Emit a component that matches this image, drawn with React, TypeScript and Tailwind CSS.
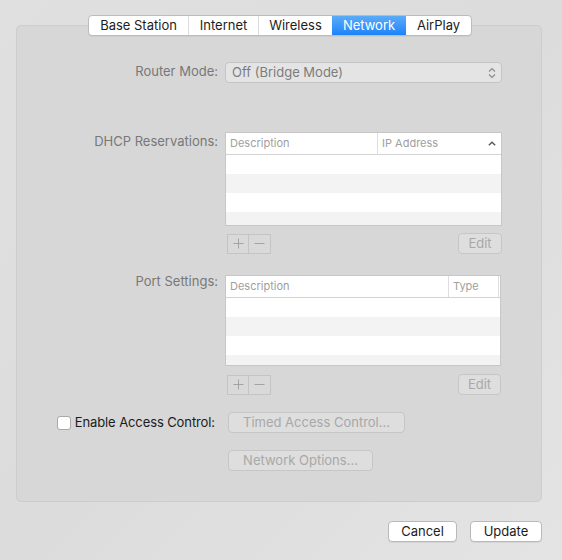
import React from "react";

const TABS = ["Base Station", "Internet", "Wireless", "Network", "AirPlay"];
const TAB_W: Record<string, string> = {
  "Base Station": "w-[99px]",
  Internet: "w-[70px]",
  Wireless: "w-[74px]",
  Network: "w-[74px]",
  AirPlay: "w-[65px]",
};

function Tabs() {
  return (
    <div className="relative z-10 flex justify-center pl-[2px]">
      <div className="flex h-[21px] overflow-hidden rounded-[4px] border border-[#bcbcbc] bg-white shadow-[0_1px_0_rgba(0,0,0,0.05)]">
        {TABS.map((t, i) => {
          const active = t === "Network";
          return (
            <div
              key={t}
              className={`${TAB_W[t]} flex items-center justify-center text-[13px] leading-none ${
                active
                  ? "bg-gradient-to-b from-[#5aabf8] to-[#1a83fb] text-white"
                  : "text-[#1d1d1d]"
              } ${i > 0 && !active && TABS[i - 1] !== "Network" ? "border-l border-[#dcdcdc]" : ""}`}
            >
              {t}
            </div>
          );
        })}
      </div>
    </div>
  );
}

function Label({ children }: { children: React.ReactNode }) {
  return <div className="text-right text-[13px] text-[#787878]">{children}</div>;
}

function DisabledButton({ children, w }: { children: React.ReactNode; w: string }) {
  return (
    <div
      className={`${w} flex h-[21px] items-center justify-center rounded-[4px] border border-[#c6c6c6] bg-[#dedede] text-[13px] text-[#a8a8a8]`}
    >
      {children}
    </div>
  );
}

function PlusMinus() {
  return (
    <div className="ml-[2px] flex h-[20px] border border-[#c4c4c4] bg-[#d9d9d9]">
      <div className="flex w-[21px] items-center justify-center border-r border-[#c4c4c4]">
        <svg width="11" height="11" viewBox="0 0 11 11">
          <path d="M5.5 0.5v10M0.5 5.5h10" stroke="#a3a3a3" strokeWidth="1" />
        </svg>
      </div>
      <div className="flex w-[21px] items-center justify-center">
        <svg width="11" height="11" viewBox="0 0 11 11">
          <path d="M0.5 5.5h10" stroke="#a3a3a3" strokeWidth="1" />
        </svg>
      </div>
    </div>
  );
}

function Table({ cols, sort, h }: { cols: [string, string, string]; sort?: boolean; h: string }) {
  return (
    <div className={`${h} overflow-hidden border border-[#c7c7c7] bg-white`}>
      <div className="flex h-[22px] items-center border-b border-[#d3d3d3] text-[11px] text-[#a0a0a0]">
        <div className={`${cols[2]} h-full border-r border-[#dedede] pl-[4px] leading-[21px]`}>
          {cols[0]}
        </div>
        <div className="flex h-full flex-1 items-center justify-between pl-[4px] pr-[5px]">
          <span>{cols[1]}</span>
          {sort && (
            <svg width="8" height="5" viewBox="0 0 8 5">
              <path d="M0.8 4.3L4 1.2L7.2 4.3" fill="none" stroke="#555" strokeWidth="1.3" />
            </svg>
          )}
        </div>
        {!sort && <div className="h-full w-[2px] border-l border-[#dedede]" />}
      </div>
      <div className="h-[19px] bg-white" />
      <div className="h-[19px] bg-[#f3f3f3]" />
      <div className="h-[19px] bg-white" />
      <div className="h-[19px] bg-[#f3f3f3]" />
    </div>
  );
}

export default function App() {
  return (
    <div
      className="h-[560px] w-[562px] bg-gradient-to-br from-[#e0e0e0] via-[#dcdcdc] to-[#e4e4e4] pt-[15px]"
      style={{ fontFamily: 'Inter, "Liberation Sans", Arial, sans-serif' }}
    >
      <div className="ml-[16px] w-[526px]">
        <Tabs />
        <div className="-mt-[11px] h-[477px] rounded-[5px] border border-[#cdcdcd] bg-[#d7d7d7] pt-[36px]">
          <div className="grid grid-cols-[201px_277px] gap-x-[7px]">
            {/* Router mode */}
            <div className="flex h-[20px] items-center justify-end">
              <Label>Router Mode:</Label>
            </div>
            <div className="flex h-[21px] items-center justify-between rounded-[4px] border border-[#c4c4c4] bg-[#e4e4e4] pl-[6px] pr-[5px] text-[13px] text-[#7c7c7c]">
              <span>Off (Bridge Mode)</span>
              <svg width="8" height="12" viewBox="0 0 8 12">
                <path d="M1 4.5L4 1.5L7 4.5M1 7.5L4 10.5L7 7.5" fill="none" stroke="#8a8a8a" strokeWidth="1.1" />
              </svg>
            </div>

            {/* DHCP */}
            <div className="mt-[49px]">
              <Label>DHCP Reservations:</Label>
            </div>
            <div className="mt-[49px]">
              <Table cols={["Description", "IP Address", "w-[152px]"]} sort h="h-[94px]" />
              <div className="mt-[7px] flex items-center justify-between">
                <PlusMinus />
                <DisabledButton w="w-[44px]">Edit</DisabledButton>
              </div>
            </div>

            {/* Port settings */}
            <div className="mt-[18px]">
              <Label>Port Settings:</Label>
            </div>
            <div className="mt-[21px] w-[276px]">
              <Table cols={["Description", "Type", "w-[223px]"]} h="h-[91px]" />
              <div className="mt-[8px] flex items-center justify-between">
                <PlusMinus />
                <DisabledButton w="w-[43px]">Edit</DisabledButton>
              </div>
            </div>

            {/* Access control */}
            <div className="mt-[17px] flex h-[22px] items-center justify-end gap-[4px] pr-[3px]">
              <div className="h-[14px] w-[14px] rounded-[3px] border border-[#a9a9a9] bg-white" />
              <span className="text-[13px] tracking-[-0.1px] text-[#1b1b1b]">Enable Access Control:</span>
            </div>
            <div className="mt-[17px] pl-[3px]">
              <DisabledButton w="w-[177px]">Timed Access Control...</DisabledButton>
            </div>

            <div />
            <div className="mt-[16px] pl-[3px]">
              <DisabledButton w="w-[145px]">Network Options...</DisabledButton>
            </div>
          </div>
        </div>
      </div>

      <div className="mt-[19px] flex justify-end gap-[13px] pr-[20px]">
        <div className="flex h-[21px] w-[69px] items-center justify-center rounded-[4px] border border-[#b9b9b9] bg-white text-[13px] text-[#1b1b1b] shadow-[0_1px_0_rgba(0,0,0,0.06)]">
          Cancel
        </div>
        <div className="flex h-[21px] w-[72px] items-center justify-center rounded-[4px] border border-[#b9b9b9] bg-white text-[13px] text-[#1b1b1b] shadow-[0_1px_0_rgba(0,0,0,0.06)]">
          Update
        </div>
      </div>
    </div>
  );
}
